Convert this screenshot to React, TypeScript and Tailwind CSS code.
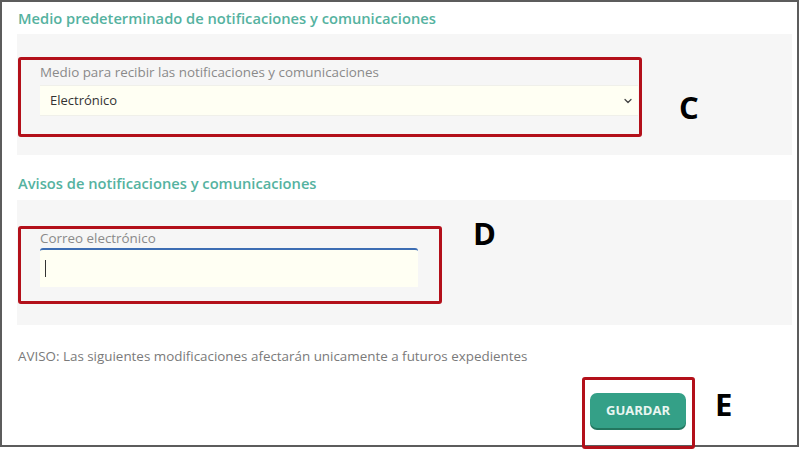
import React from "react";
import { ChevronDown } from "lucide-react";

const font = { fontFamily: '"Open Sans", "Noto Sans", sans-serif' };

const Letter: React.FC<{ children: string; className: string }> = ({ children, className }) => (
  <span className={`absolute text-[31px] font-bold leading-none text-black ${className}`}>{children}</span>
);

const App: React.FC = () => {
  return (
    <div className="relative h-[452px] w-[800px] overflow-hidden bg-white" style={font}>
      <div className="h-[447px] w-[799px] border-2 border-[#5c5c5c] bg-white">
        <h2 className="flex h-[32px] items-center pl-4 text-[14.7px] font-semibold text-[#55b2a0]">
          Medio predeterminado de notificaciones y comunicaciones
        </h2>

        {/* panel 1 */}
        <div className="ml-[15px] mr-[5px] h-[121px] bg-[#f6f6f6] pt-[23px]">
          <div className="ml-px h-[80px] w-[624px] rounded-[3px] border-[3px] border-[#b3101a] pl-[19px] pt-[4px]">
            <div className="text-[13.4px] leading-[16px] text-[#8a8a8a]">
              Medio para recibir las notificaciones y comunicaciones
            </div>
            <div className="mt-[5px] flex h-[31px] w-[598px] items-center justify-between border-y border-[#f0f0ea] bg-[#fffff3] pl-[10px] pr-[4px] text-[13px] text-[#333]">
              <span>Electrónico</span>
              <ChevronDown size={12} strokeWidth={2.5} className="text-[#444]" />
            </div>
          </div>
        </div>

        <h2 className="h-[45px] pl-4 pt-[18px] text-[14.7px] font-semibold leading-[20px] text-[#55b2a0]">
          Avisos de notificaciones y comunicaciones
        </h2>

        {/* panel 2 */}
        <div className="ml-[15px] mr-[5px] h-[125px] bg-[#f6f6f6] pt-[26px]">
          <div className="ml-px h-[78px] w-[424px] rounded-[3px] border-[3px] border-[#b3101a] pl-[19px] pt-[1px]">
            <div className="text-[13.4px] leading-[16px] text-[#8a8a8a]">Correo electrónico</div>
            <div className="mt-[2px] flex h-[39px] w-[378px] items-center rounded-t-[3px] border-t-2 border-[#3d6db3] bg-[#fffff3] pl-[5px]">
              <span className="h-[17px] w-px bg-[#333]" />
            </div>
          </div>
        </div>

        <p className="mt-[22px] pl-4 text-[13.4px] leading-[18px] text-[#7a7a7a]">
          AVISO: Las siguientes modificaciones afectarán unicamente a futuros expedientes
        </p>

        <div className="mt-[12px] flex justify-end pr-[102px]">
          <div className="relative z-10 h-[72px] w-[113px] rounded-[3px] border-[3px] border-[#b3101a] pl-[5px] pt-[13px]">
            <button className="h-[35px] w-[96px] rounded-[7px] bg-[#34a087] text-[13px] font-bold text-[#e9f6f1] shadow-[0_2px_0_#23765f]">
              GUARDAR
            </button>
          </div>
        </div>
      </div>

      <Letter className="left-[679px] top-[92px]">C</Letter>
      <Letter className="left-[473px] top-[218px]">D</Letter>
      <Letter className="left-[715px] top-[389px]">E</Letter>
    </div>
  );
};

export default App;
